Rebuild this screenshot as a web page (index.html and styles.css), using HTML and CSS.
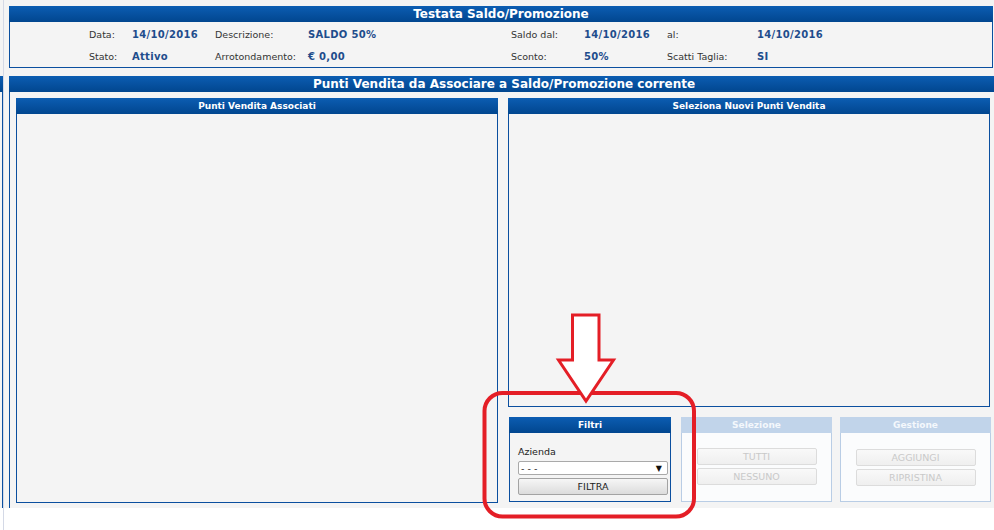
FILE: index.html
```html
<!DOCTYPE html>
<html lang="it">
<head>
  <meta charset="UTF-8">
  <meta name="viewport" content="width=device-width, initial-scale=1.0">
  <title>Punti Vendita - Saldo/Promozione</title>
  <link rel="stylesheet" href="styles.css">
</head>
<body>
    <div class="screen">
        <!-- bordo del pannello laterale (fuori schermo) -->
        <div class="edge">
            <div class="edge-head"></div>
            <div class="edge-line"></div>
        </div>
        <div class="rule"></div>

        <div class="main">
            <!-- Testata -->
            <div class="panel testata">
                <div class="panel-head">Testata Saldo/Promozione</div>
                <div class="panel-body fields">
                    <span class="lbl">Data:</span><span class="val">14/10/2016</span>
                    <span class="lbl">Descrizione:</span><span class="val">SALDO 50%</span>
                    <span class="lbl">Saldo dal:</span><span class="val">14/10/2016</span>
                    <span class="lbl">al:</span><span class="val">14/10/2016</span>

                    <span class="lbl">Stato:</span><span class="val">Attivo</span>
                    <span class="lbl">Arrotondamento:</span><span class="val">€ 0,00</span>
                    <span class="lbl">Sconto:</span><span class="val">50%</span>
                    <span class="lbl">Scatti Taglia:</span><span class="val">SI</span>
                </div>
            </div>

            <!-- Punti vendita -->
            <div class="panel punti">
                <div class="panel-head">Punti Vendita da Associare a Saldo/Promozione corrente</div>
                <div class="panel-body columns">
                    <div class="box associati">
                        <div class="box-head">Punti Vendita Associati</div>
                        <div class="box-body"></div>
                    </div>

                    <div class="side">
                        <div class="box nuovi">
                            <div class="box-head">Seleziona Nuovi Punti Vendita</div>
                            <div class="box-body"></div>
                        </div>

                        <div class="tools">
                            <div class="tool filtri">
                                <div class="tool-head">Filtri</div>
                                <div class="tool-body">
                                    <label class="field-label">Azienda</label>
                                    <div class="select">
                                        <span>- - -</span>
                                        <span class="caret">▼</span>
                                    </div>
                                    <button type="button" class="btn">FILTRA</button>
                                </div>
                            </div>

                            <div class="tool off selezione">
                                <div class="tool-head">Selezione</div>
                                <div class="tool-body">
                                    <button type="button" class="btn" disabled>TUTTI</button>
                                    <button type="button" class="btn" disabled>NESSUNO</button>
                                </div>
                            </div>

                            <div class="tool off gestione">
                                <div class="tool-head">Gestione</div>
                                <div class="tool-body">
                                    <button type="button" class="btn" disabled>AGGIUNGI</button>
                                    <button type="button" class="btn" disabled>RIPRISTINA</button>
                                </div>
                            </div>
                        </div>
                    </div>
                </div>
            </div>
        </div>

        <!-- evidenziazione rossa sopra la pagina -->
        <svg class="callout" width="994" height="530" viewBox="0 0 994 530">
            <rect x="484.5" y="393" width="209.5" height="123.5" rx="18" ry="18"
                  fill="none" stroke="#e41e26" stroke-width="4"/>
            <polygon points="572.5,315 599,315 599,360 613.5,360 586,401 558.5,360 572.5,360"
                     fill="#ffffff" stroke="#e41e26" stroke-width="3" stroke-linejoin="miter"/>
        </svg>
    </div>
</body>
</html>
```

FILE: styles.css
```css
/* General */
body {
    margin: 0;
    padding: 0;
    background: #ffffff;
    font-family: 'DejaVu Sans', Verdana, sans-serif;
    font-size: 9.5px;
    color: #333;
}

.screen {
    position: relative;
    display: flex;
    height: 530px;
    overflow: hidden;
}

/* left edge */
.edge {
    width: 3px;
    height: 508px;
    background: #f4f4f4;
}

.edge-head {
    margin-top: 76px;
    height: 16px;
    background: linear-gradient(#0c5db2, #01468f);
}

.edge-line {
    margin-left: 2px;
    width: 1px;
    height: 416px;
    background: #0b4f9f;
}

.rule {
    width: 1px;
    height: 530px;
    background: #d4d9e6;
}

.main {
    flex: 1;
    height: 508px;
    box-sizing: border-box;
    padding: 6px 0 0 5px;
    background: #f4f4f4;
    overflow: hidden;
}

/* Panels */
.panel-head {
    height: 16px;
    line-height: 16px;
    background: linear-gradient(#0c5db2, #01468f);
    color: #fff;
    font-weight: bold;
    font-size: 12px;
    text-align: center;
    white-space: nowrap;
}

.testata {
    margin-right: 1px;
}

.testata .panel-body {
    height: 44px;
    border: 1px solid #0b4f9f;
    border-top: none;
}

.fields {
    display: grid;
    grid-template-columns: 43px 83px 93px 203px 73px 83px 90px 1fr;
    grid-auto-rows: 22px;
    align-items: center;
    padding: 1px 0 0 79px;
}

.lbl {
    color: #333;
}

.val {
    color: #1e4d8c;
    font-weight: bold;
    font-size: 10px;
    letter-spacing: 0.3px;
}

.punti {
    width: calc(100% + 5px);
    margin-top: 8px;
}

.punti .panel-body {
    height: 416px;
    box-sizing: border-box;
    border-left: 1px solid #0b4f9f;
    border-right: 1px solid #0b4f9f;
}

.columns {
    display: flex;
    gap: 10px;
    padding: 6px 0 0 6px;
}

/* Boxes */
.box {
    width: 482px;
    display: flex;
    flex-direction: column;
}

.box-head {
    height: 16px;
    line-height: 16px;
    background: linear-gradient(#0c5db2, #01468f);
    color: #fff;
    font-weight: bold;
    font-size: 9px;
    text-align: center;
}

.box-body {
    flex: 1;
    border: 1px solid #0b4f9f;
    border-top: none;
}

.associati {
    height: 405px;
}

.side {
    width: 483px;
    display: flex;
    flex-direction: column;
}

.nuovi {
    height: 309px;
}

/* Tools */
.tools {
    display: flex;
    margin-top: 10px;
}

.tool {
    height: 85px;
    display: flex;
    flex-direction: column;
}

.tool-head {
    height: 16px;
    line-height: 16px;
    background: linear-gradient(#0c5db2, #01468f);
    color: #fff;
    font-weight: bold;
    font-size: 9px;
    text-align: center;
}

.tool-body {
    flex: 1;
    border: 1px solid #0b4f9f;
    border-top: none;
    display: flex;
    flex-direction: column;
}

.filtri {
    width: 162px;
    margin-left: 1px;
}

.filtri .tool-body {
    padding: 12px 2px 0 8px;
}

.selezione {
    width: 151px;
    margin-left: 10px;
}

.gestione {
    width: 151px;
    margin-left: 8px;
}

.off .tool-head {
    background: #c1d4ea;
    color: #f4f8fc;
}

.off .tool-body {
    border-color: #b9cde5;
    background: #fbfcfd;
    align-items: center;
    gap: 3px;
    padding-top: 15px;
}

.gestione .tool-body {
    padding-top: 16px;
}

.field-label {
    display: block;
    height: 11px;
    padding-top: 1px;
    line-height: 12px;
    color: #222;
}

.select {
    display: flex;
    justify-content: space-between;
    align-items: center;
    width: 150px;
    height: 14px;
    box-sizing: border-box;
    margin-top: 4px;
    padding: 0 5px 0 2px;
    background: #fff;
    border: 1px solid #a9a9a9;
    border-radius: 2px;
    color: #222;
}

.caret {
    font-size: 8px;
    color: #111;
}

.btn {
    display: block;
    width: 150px;
    height: 17px;
    margin: 3px 0 0;
    padding: 0;
    border: 1px solid #a3a3a3;
    border-radius: 2px;
    background: linear-gradient(#f6f6f6, #dcdcdc);
    font-family: 'DejaVu Sans', Verdana, sans-serif;
    font-size: 9.5px;
    color: #222;
}

.off .btn {
    width: 120px;
    margin: 0;
    border-color: #dcdcdc;
    background: linear-gradient(#f9f9f9, #efefef);
    color: #c9c9c9;
}

/* Overlay */
.callout {
    position: absolute;
    left: 0;
    top: 0;
    pointer-events: none;
}
```
